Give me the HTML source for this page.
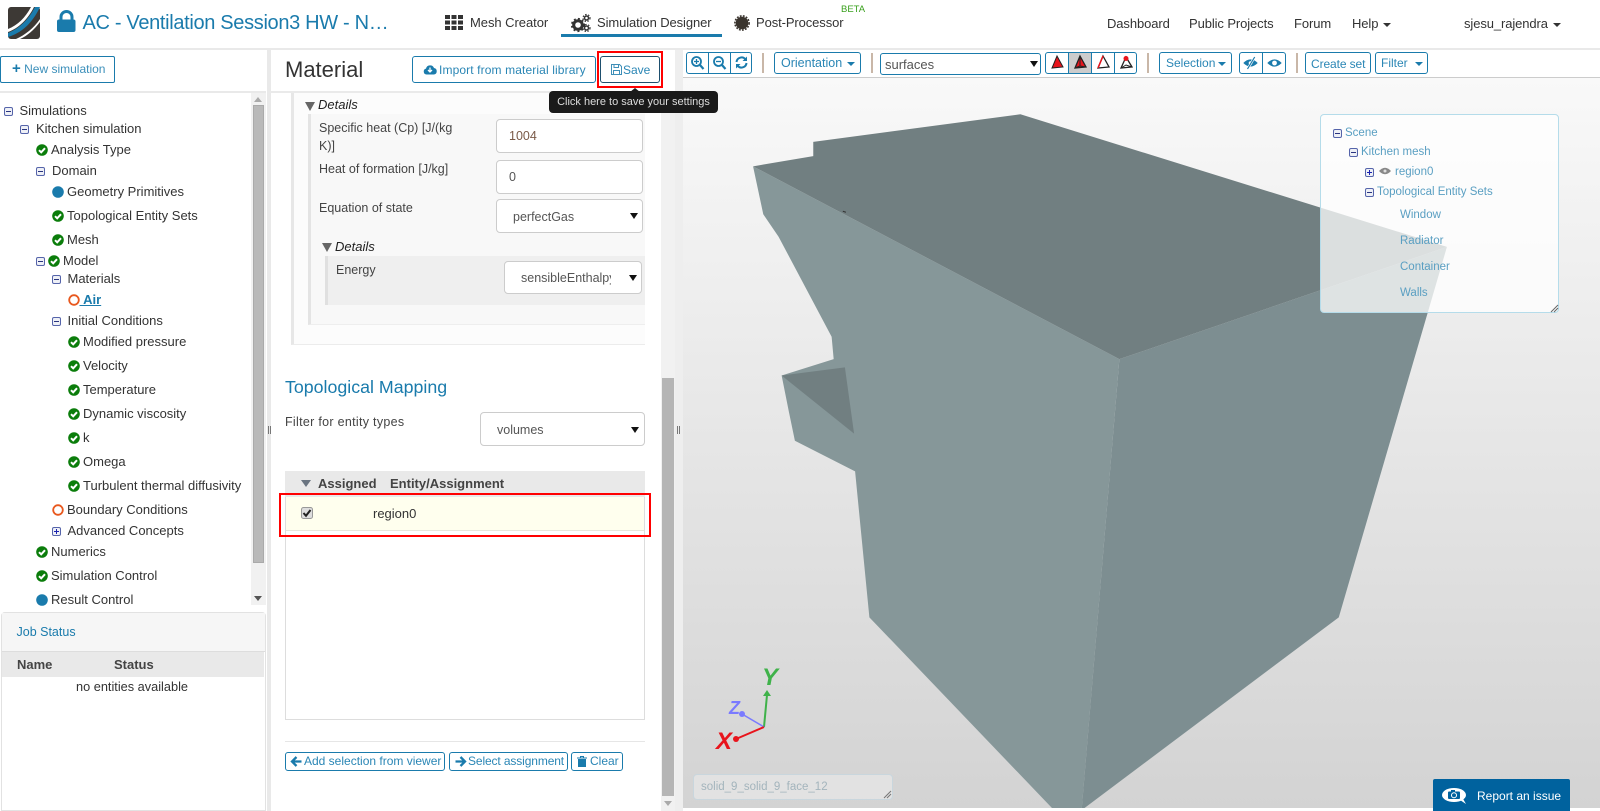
<!DOCTYPE html>
<html><head><meta charset="utf-8"><title>AC - Ventilation Session3 HW</title>
<style>
html,body{margin:0;padding:0;width:1600px;height:811px;overflow:hidden;background:#fff;font-family:"Liberation Sans",sans-serif;color:#333}
.a{position:absolute;white-space:nowrap}
.n{position:absolute;white-space:nowrap;font-size:13px;line-height:20px;color:#333}
.l{position:absolute;white-space:nowrap;font-size:12.5px;line-height:18px;color:#444}
.b{position:absolute;box-sizing:border-box;border:1px solid #1a7bac;border-radius:3px;background:#fff;color:#2a86b5;font-size:12px;text-align:left;white-space:nowrap}
.s{position:absolute;box-sizing:border-box;border:1px solid #ccc;border-radius:4px;background:#fff;font-size:12.5px;color:#555}
.c{position:absolute;width:0;height:0;border-left:4px solid transparent;border-right:4px solid transparent;border-top:4px solid #1a7bac}
.nv{position:absolute;white-space:nowrap;font-size:13px;line-height:20px;color:#333;top:13px}
.sc{position:absolute;white-space:nowrap;font-size:11.5px;line-height:14px;color:#5a9fc2}
.ar{position:absolute;width:0;height:0;border-left:4px solid transparent;border-right:4px solid transparent;border-top:6px solid #111}
svg{display:block;overflow:visible}
.sep{position:absolute;top:53px;width:2px;height:20px;background:#c9b7a8}
</style></head><body>
<svg width="0" height="0" style="position:absolute">
<symbol id="ck" viewBox="0 0 12 12"><circle cx="6" cy="6" r="5.8" fill="#0b7d0b"/><path d="M3 6.2 5.2 8.3 9 4.2" fill="none" stroke="#fff" stroke-width="2"/></symbol>
<symbol id="bl" viewBox="0 0 12 12"><circle cx="6" cy="6" r="5.8" fill="#1a7bac"/></symbol>
<symbol id="or" viewBox="0 0 12 12"><circle cx="6" cy="6" r="4.8" fill="#fff" stroke="#e8581e" stroke-width="1.8"/></symbol>
<symbol id="mi" viewBox="0 0 9 9"><rect x=".5" y=".5" width="8" height="8" rx="1.5" fill="#eef0f6" stroke="#5564aa"/><path d="M2 4.5H7" stroke="#2a3580"/></symbol>
<symbol id="pl" viewBox="0 0 9 9"><rect x=".5" y=".5" width="8" height="8" rx="1.5" fill="#eef0f6" stroke="#5564aa"/><path d="M2 4.5H7M4.5 2V7" stroke="#1a22b0"/></symbol>
</svg>

<!-- header -->
<div class="a" style="left:0;top:0;width:1600px;height:48px;background:#fff;border-bottom:2px solid #e9e9e9;box-sizing:content-box"></div>
<svg class="a" style="left:8px;top:7px" width="32" height="32" viewBox="0 0 32 32"><rect width="32" height="32" rx="3" fill="#3d3935"/><path d="M0 26C10 22 20 14 27 0H32C24 17 13 26 0 30Z" fill="#1a7bac"/><path d="M0 22C10 18 17 11 23 0H26C20 12 11 21 0 25Z" fill="#fff"/><path d="M8 32C17 28 26 21 32 12V15C26 23 19 29 12 32Z" fill="#fff"/></svg>
<svg class="a" style="left:57px;top:10px" width="19" height="22" viewBox="0 0 19 22"><path d="M4 10V7a5.500 5.500 0 0 1 11 0v3" fill="none" stroke="#1a7bac" stroke-width="3"/><rect y="9.500" width="18.500" height="12.500" rx="2" fill="#1a7bac"/></svg>
<div class="a" style="left:82.500px;top:10px;font-size:20px;line-height:26px;letter-spacing:-.33px;color:#1a7bac">AC - Ventilation Session3 HW - N…</div>

<svg class="a" style="left:445px;top:15px" width="18" height="15" viewBox="0 0 18 15" fill="#333"><rect width="5" height="4"/><rect x="6.500" width="5" height="4"/><rect x="13" width="5" height="4"/><rect y="5.500" width="5" height="4"/><rect x="6.500" y="5.500" width="5" height="4"/><rect x="13" y="5.500" width="5" height="4"/><rect y="11" width="5" height="4"/><rect x="6.500" y="11" width="5" height="4"/><rect x="13" y="11" width="5" height="4"/></svg>
<div class="nv" style="left:470px;letter-spacing:-.05px">Mesh Creator</div>
<svg class="a" style="left:571px;top:14px" width="20" height="18" viewBox="0 0 20 18"><circle cx="7" cy="11" r="4.300" fill="none" stroke="#333" stroke-width="3"/><circle cx="7" cy="11" r="6.300" fill="none" stroke="#333" stroke-width="1.600" stroke-dasharray="2 2.200"/><circle cx="15.500" cy="4" r="2" fill="none" stroke="#333" stroke-width="1.500"/><circle cx="15.500" cy="4" r="3.500" fill="none" stroke="#333" stroke-width="1.200" stroke-dasharray="1.500 1.500"/><circle cx="15.500" cy="14" r="2" fill="none" stroke="#333" stroke-width="1.500"/><circle cx="15.500" cy="14" r="3.500" fill="none" stroke="#333" stroke-width="1.200" stroke-dasharray="1.500 1.500"/></svg>
<div class="nv" style="left:597px;letter-spacing:-.1px">Simulation Designer</div>
<div class="a" style="left:561px;top:34px;width:161px;height:3px;background:#1a7bac"></div>
<svg class="a" style="left:734px;top:15px" width="16" height="16" viewBox="0 0 16 16"><circle cx="8" cy="8" r="6.300" fill="#3a342e"/><circle cx="8" cy="8" r="7.100" fill="none" stroke="#3a342e" stroke-width="1.600" stroke-dasharray="1.800 1.300"/></svg>
<div class="nv" style="left:756px;letter-spacing:-.1px">Post-Processor</div>
<div class="a" style="left:841px;top:3px;font-size:9.500px;line-height:14px;color:#3aa01e">BETA</div>
<div class="nv" style="left:1107px;top:14px;letter-spacing:-.1px">Dashboard</div>
<div class="nv" style="left:1189px;top:14px;letter-spacing:-.1px">Public Projects</div>
<div class="nv" style="left:1294px;top:14px;letter-spacing:-.1px">Forum</div>
<div class="nv" style="left:1352px;top:14px;letter-spacing:-.1px">Help</div><div class="c" style="left:1383px;top:23px;border-top-color:#333"></div>
<div class="nv" style="left:1464px;top:14px;letter-spacing:-.1px">sjesu_rajendra</div><div class="c" style="left:1553px;top:23px;border-top-color:#333"></div>

<!-- gutters -->
<div class="a" style="left:267px;top:50px;width:4px;height:761px;background:#e9e9e9"></div>
<div class="a" style="left:267.500px;top:426px;width:3px;height:8px;border-left:1px solid #777;border-right:1px solid #777;box-sizing:border-box"></div>
<div class="a" style="left:675px;top:50px;width:8px;height:761px;background:#eeeeee"></div>
<div class="a" style="left:677px;top:426px;width:3px;height:8px;border-left:1px solid #777;border-right:1px solid #777;box-sizing:border-box"></div>

<!-- left panel -->
<div class="b" style="left:0;top:56px;width:115px;height:27px;line-height:25px;padding-left:11px;border-radius:2px;color:#3b8fba"><span style="font-weight:bold;font-size:15px;color:#1a7bac;line-height:20px">+</span> New simulation</div>
<div class="a" style="left:0;top:91px;width:266px;height:2px;background:#e9e9e9"></div>
<div class="a" style="left:251px;top:93px;width:15px;height:512px;background:#f1f1f1"></div>
<div class="a" style="left:253px;top:105px;width:11px;height:458px;background:#b9b9b9;border:1px solid #aaa;box-sizing:border-box"></div>
<div class="a" style="left:254px;top:97px;width:0;height:0;border-left:4px solid transparent;border-right:4px solid transparent;border-bottom:5px solid #aaa"></div>
<div class="a" style="left:254px;top:596px;width:0;height:0;border-left:4px solid transparent;border-right:4px solid transparent;border-top:5px solid #555"></div>

<svg class="a" style="left:4px;top:107px" width="9" height="9"><use href="#mi"/></svg><div class="n" style="left:19.500px;top:101px">Simulations</div>
<svg class="a" style="left:20px;top:125px" width="9" height="9"><use href="#mi"/></svg><div class="n" style="left:36px;top:119px">Kitchen simulation</div>
<svg class="a" style="left:36px;top:144px" width="12" height="12"><use href="#ck"/></svg><div class="n" style="left:51px;top:140px">Analysis Type</div>
<svg class="a" style="left:36px;top:167px" width="9" height="9"><use href="#mi"/></svg><div class="n" style="left:52px;top:161px">Domain</div>
<svg class="a" style="left:52px;top:186px" width="12" height="12"><use href="#bl"/></svg><div class="n" style="left:67px;top:182px">Geometry Primitives</div>
<svg class="a" style="left:52px;top:210px" width="12" height="12"><use href="#ck"/></svg><div class="n" style="left:67px;top:206px">Topological Entity Sets</div>
<svg class="a" style="left:52px;top:234px" width="12" height="12"><use href="#ck"/></svg><div class="n" style="left:67px;top:230px">Mesh</div>
<svg class="a" style="left:36px;top:257px" width="9" height="9"><use href="#mi"/></svg><svg class="a" style="left:48px;top:255px" width="12" height="12"><use href="#ck"/></svg><div class="n" style="left:63px;top:251px">Model</div>
<svg class="a" style="left:52px;top:275px" width="9" height="9"><use href="#mi"/></svg><div class="n" style="left:67.500px;top:269px">Materials</div>
<svg class="a" style="left:68px;top:294px" width="12" height="12"><use href="#or"/></svg><div class="n" style="left:79.500px;top:290px;font-weight:bold;color:#1a7bac;text-decoration:underline">&nbsp;Air</div>
<svg class="a" style="left:52px;top:317px" width="9" height="9"><use href="#mi"/></svg><div class="n" style="left:67.500px;top:311px">Initial Conditions</div>
<svg class="a" style="left:68px;top:336px" width="12" height="12"><use href="#ck"/></svg><div class="n" style="left:83px;top:332px">Modified pressure</div>
<svg class="a" style="left:68px;top:360px" width="12" height="12"><use href="#ck"/></svg><div class="n" style="left:83px;top:356px">Velocity</div>
<svg class="a" style="left:68px;top:384px" width="12" height="12"><use href="#ck"/></svg><div class="n" style="left:83px;top:380px">Temperature</div>
<svg class="a" style="left:68px;top:408px" width="12" height="12"><use href="#ck"/></svg><div class="n" style="left:83px;top:404px">Dynamic viscosity</div>
<svg class="a" style="left:68px;top:432px" width="12" height="12"><use href="#ck"/></svg><div class="n" style="left:83px;top:428px">k</div>
<svg class="a" style="left:68px;top:456px" width="12" height="12"><use href="#ck"/></svg><div class="n" style="left:83px;top:452px">Omega</div>
<svg class="a" style="left:68px;top:480px" width="12" height="12"><use href="#ck"/></svg><div class="n" style="left:83px;top:476px">Turbulent thermal diffusivity</div>
<svg class="a" style="left:52px;top:504px" width="12" height="12"><use href="#or"/></svg><div class="n" style="left:67px;top:500px">Boundary Conditions</div>
<svg class="a" style="left:52px;top:527px" width="9" height="9"><use href="#pl"/></svg><div class="n" style="left:67.500px;top:521px">Advanced Concepts</div>
<svg class="a" style="left:36px;top:546px" width="12" height="12"><use href="#ck"/></svg><div class="n" style="left:51px;top:542px">Numerics</div>
<svg class="a" style="left:36px;top:570px" width="12" height="12"><use href="#ck"/></svg><div class="n" style="left:51px;top:566px">Simulation Control</div>
<svg class="a" style="left:36px;top:594px" width="12" height="12"><use href="#bl"/></svg><div class="n" style="left:51px;top:590px">Result Control</div>

<!-- job status -->
<div class="a" style="left:1px;top:612px;width:265px;height:199px;border:1px solid #e2e2e2;border-radius:4px 4px 0 0;box-sizing:border-box;background:#fff"></div>
<div class="a" style="left:2px;top:613px;width:263px;height:38px;background:#f6f6f6;border-bottom:1px solid #ddd"></div>
<div class="a" style="left:16.500px;top:623px;font-size:12.500px;line-height:18px;color:#1a7bac">Job Status</div>
<div class="a" style="left:2px;top:652px;width:262px;height:25px;background:#e9e9e9"></div>
<div class="a" style="left:17px;top:656px;font-size:13px;font-weight:bold;line-height:18px;color:#444">Name</div>
<div class="a" style="left:114px;top:656px;font-size:13px;font-weight:bold;line-height:18px;color:#444">Status</div>
<div class="a" style="left:76px;top:678px;font-size:12.750px;line-height:18px;color:#333">no entities available</div>

<!-- material panel -->
<div class="a" style="left:285px;top:56px;font-size:22px;line-height:28px;color:#333">Material</div>
<div class="b" style="left:412px;top:56px;width:184px;height:27px;line-height:26px;padding-left:26px;letter-spacing:.12px">Import from material library</div>
<svg class="a" style="left:423px;top:64px" width="14" height="11" viewBox="0 0 14 11"><path d="M3.500 10.500A3 3 0 0 1 3 4.600 4.200 4.200 0 0 1 11 4a3.300 3.300 0 0 1 0 6.500Z" fill="#1a7bac"/><path d="M7 3.500v4M5 6l2 2 2-2" fill="none" stroke="#fff" stroke-width="1.300"/></svg>
<div class="b" style="left:600px;top:56px;width:60px;height:27px;line-height:26px;padding-left:22px;border-color:#1e4f6e">Save</div>
<svg class="a" style="left:611px;top:64px" width="11" height="11" viewBox="0 0 11 11"><path d="M.5.500H8.500L10.500 2.500V10.500H.5ZM3 .5V3.500H7.500V.5M2.500 10.500V6.500H8.500V10.500" fill="none" stroke="#3f8fb8" stroke-width="1"/></svg>
<div class="a" style="left:597px;top:51px;width:66px;height:37px;border:2px solid #f00;box-sizing:border-box"></div>
<div class="a" style="left:270px;top:91px;width:391px;height:2px;background:#eaeaea"></div>
<div class="a" style="left:661px;top:93px;width:14px;height:718px;background:#f1f1f1"></div>
<div class="a" style="left:662px;top:378px;width:12px;height:418px;background:#b5b5b5"></div>
<div class="a" style="left:664px;top:801px;width:0;height:0;border-left:4px solid transparent;border-right:4px solid transparent;border-top:5px solid #aaa"></div>

<div class="a" style="left:291px;top:93px;width:354px;height:252px;background:#fcfcfc;border-left:3px solid #e7e7e7;border-bottom:1px solid #ececec;box-sizing:border-box"></div>
<div class="a" style="left:305px;top:102px;width:0;height:0;border-left:5.500px solid transparent;border-right:5.500px solid transparent;border-top:9px solid #666"></div>
<div class="a" style="left:318px;top:97px;font-size:13px;font-style:italic;line-height:16px;color:#222">Details</div>
<div class="a" style="left:308px;top:114px;width:337px;height:211px;background:#f8f8f8;border-left:3px solid #e4e4e4;border-bottom:1px solid #eee;box-sizing:border-box"></div>
<div class="l" style="left:319px;top:119px">Specific heat (Cp) [J/(kg</div>
<div class="l" style="left:319px;top:137px">K)]</div>
<div class="l" style="left:319px;top:160px">Heat of formation [J/kg]</div>
<div class="l" style="left:319px;top:199px">Equation of state</div>
<div class="s" style="left:496px;top:119px;width:147px;height:34px;line-height:32px;padding-left:12px;color:#7a5a48">1004</div>
<div class="s" style="left:496px;top:160px;width:147px;height:34px;line-height:32px;padding-left:12px">0</div>
<div class="s" style="left:496px;top:199px;width:147px;height:34px;line-height:34px;padding-left:16px">perfectGas</div><div class="ar" style="left:630px;top:213px"></div>
<div class="a" style="left:322px;top:243px;width:0;height:0;border-left:5.500px solid transparent;border-right:5.500px solid transparent;border-top:9px solid #666"></div>
<div class="a" style="left:335px;top:239px;font-size:13px;font-style:italic;line-height:16px;color:#222">Details</div>
<div class="a" style="left:325px;top:256px;width:320px;height:49px;background:#efefef;border-left:3px solid #e0e0e0;box-sizing:border-box"></div>
<div class="l" style="left:336px;top:261px">Energy</div>
<div class="s" style="left:504px;top:261px;width:138px;height:33px;line-height:33px;padding-left:16px;overflow:hidden"><span style="display:block;width:90px;overflow:hidden">sensibleEnthalpy</span></div><div class="ar" style="left:629px;top:275px"></div>

<div class="a" style="left:285px;top:376px;font-size:17.800px;line-height:22px;color:#1a7bac">Topological Mapping</div>
<div class="l" style="left:285px;top:413px;letter-spacing:.3px">Filter for entity types</div>
<div class="s" style="left:480px;top:412px;width:165px;height:34px;line-height:34px;padding-left:16px">volumes</div><div class="ar" style="left:631px;top:427px"></div>

<div class="a" style="left:285px;top:471px;width:360px;height:249px;border:1px solid #ddd;box-sizing:border-box;background:#fff"></div>
<div class="a" style="left:285px;top:471px;width:360px;height:26px;background:#e9e9e9"></div>
<div class="a" style="left:301px;top:480px;width:0;height:0;border-left:5px solid transparent;border-right:5px solid transparent;border-top:7px solid #6a7480"></div>
<div class="a" style="left:318px;top:475px;font-size:13px;font-weight:bold;line-height:18px;color:#444">Assigned</div>
<div class="a" style="left:390px;top:475px;font-size:13px;font-weight:bold;line-height:18px;color:#444">Entity/Assignment</div>
<div class="a" style="left:286px;top:497px;width:358px;height:34px;background:#ffffee;border-bottom:1px solid #e6e6dc;box-sizing:border-box"></div>
<svg class="a" style="left:301px;top:507px" width="12" height="12" viewBox="0 0 12 12"><rect x=".5" y=".5" width="11" height="11" rx="2" fill="#ddd" stroke="#999"/><path d="M2.500 6 5 8.800 9.500 3" fill="none" stroke="#222" stroke-width="2"/></svg>
<div class="a" style="left:373px;top:505px;font-size:13px;line-height:18px;color:#333">region0</div>
<div class="a" style="left:279px;top:493px;width:372px;height:44px;border:2px solid #f00;box-sizing:border-box"></div>
<div class="a" style="left:285px;top:741px;width:360px;height:1px;background:#e6e6e6"></div>
<div class="b" style="left:285px;top:752px;width:160px;height:19px;line-height:17px;padding-left:18px">Add selection from viewer</div>
<svg class="a" style="left:291px;top:756px" width="11" height="11" viewBox="0 0 11 11"><path d="M5.500 1 1 5.500 5.500 10M1.500 5.500H10.500" fill="none" stroke="#1a7bac" stroke-width="2.300"/></svg>
<div class="b" style="left:449px;top:752px;width:119px;height:19px;line-height:17px;padding-left:18px;letter-spacing:-.12px">Select assignment</div>
<svg class="a" style="left:455px;top:756px" width="11" height="11" viewBox="0 0 11 11"><path d="M5.500 1 10 5.500 5.500 10M9.500 5.500H.5" fill="none" stroke="#1a7bac" stroke-width="2.300"/></svg>
<div class="b" style="left:571px;top:752px;width:52px;height:19px;line-height:17px;padding-left:18px">Clear</div>
<svg class="a" style="left:577px;top:756px" width="10" height="11" viewBox="0 0 10 11"><path d="M0 2H10M3.500 2V.5H6.500V2" fill="none" stroke="#1a7bac"/><path d="M1 3H9V11H1Z" fill="#1a7bac"/></svg>

<!-- viewer -->
<div class="a" style="left:683px;top:77px;width:917px;height:731px;background:linear-gradient(#f9f9f9,#d3d3d3);border-top:1px solid #ccc;box-sizing:border-box;overflow:hidden"></div>
<svg class="a" style="left:0;top:0;clip-path:inset(78px 0 3px 683px)" width="1600" height="811" viewBox="0 0 1568 794.800">
<polygon fill="#869799" points="738,163 748,210 763,232 815,330 817,352 766,368 773,403 779,432 838,462 852,605 1033,794 1060,794 1097,352"/>
<polygon fill="#7d8e91" points="1097,352 1418,242 1312,605 1060,794"/>
<polygon fill="#717f81" points="738,163 797,153 797,139 1000,112 1418,242 1097,352"/>
<polygon fill="#717f81" points="766,368 828,360 837,425"/>
<path d="M826 207l3 1" stroke="#333" stroke-width="1"/>
</svg>

<!-- tooltip -->
<div class="a" style="left:630px;top:88px;width:0;height:0;border-left:5px solid transparent;border-right:5px solid transparent;border-bottom:4px solid #1a1a1a"></div>
<div class="a" style="left:549px;top:91px;width:169px;height:22px;background:#1a1a1a;border-radius:4px;color:#ddd;font-size:11px;line-height:22px;text-align:center">Click here to save your settings</div>

<!-- scene panel -->
<div class="a" style="left:1320px;top:114px;width:239px;height:199px;background:rgba(255,255,255,.75);border:1px solid #b5dcea;border-radius:4px;box-sizing:border-box"></div>
<svg class="a" style="left:1333px;top:129px" width="9" height="9"><use href="#mi"/></svg><div class="sc" style="left:1345px;top:126px">Scene</div>
<svg class="a" style="left:1349px;top:148px" width="9" height="9"><use href="#mi"/></svg><div class="sc" style="left:1361px;top:145px">Kitchen mesh</div>
<svg class="a" style="left:1365px;top:168px" width="9" height="9"><use href="#pl"/></svg>
<svg class="a" style="left:1379px;top:167px" width="12" height="8" viewBox="0 0 12 8"><path d="M0 4Q6-2.500 12 4 6 10.500 0 4Z" fill="#888"/><circle cx="6" cy="4" r="1.500" fill="#ddd"/></svg>
<div class="sc" style="left:1395px;top:165px">region0</div>
<svg class="a" style="left:1365px;top:188px" width="9" height="9"><use href="#mi"/></svg><div class="sc" style="left:1377px;top:185px">Topological Entity Sets</div>
<div class="sc" style="left:1400px;top:208px">Window</div>
<div class="sc" style="left:1400px;top:234px">Radiator</div>
<div class="sc" style="left:1400px;top:260px">Container</div>
<div class="sc" style="left:1400px;top:286px">Walls</div>
<svg class="a" style="left:1551px;top:305px" width="7" height="7"><path d="M0 7 7 0M3 7 7 3" stroke="#666" stroke-width="1"/></svg>

<!-- axes -->
<svg class="a" style="left:710px;top:660px" width="80" height="100" viewBox="710 660 80 100">
<path d="M764 727 767 695" stroke="#3fb24a" stroke-width="2"/><path d="M767 690 763 696H771Z" fill="#3fb24a"/>
<path d="M764 727 742 714" stroke="#7a7aff" stroke-width="1.500"/><circle cx="742" cy="714" r="3" fill="#7a7aff"/>
<path d="M764 727 736 739" stroke="#e8141c" stroke-width="2"/><circle cx="736" cy="739" r="3" fill="#e8141c"/>
<text x="762" y="685" font-family="Liberation Sans" font-size="24" font-weight="bold" font-style="italic" fill="#3fb24a">Y</text>
<text x="729" y="714" font-family="Liberation Sans" font-size="18" font-weight="bold" font-style="italic" fill="#7a7aff">Z</text>
<text x="716" y="749" font-family="Liberation Sans" font-size="24" font-weight="bold" font-style="italic" fill="#e8141c">X</text>
</svg>
<div class="a" style="left:693px;top:774px;width:200px;height:26px;background:rgba(235,235,235,.6);border:1px solid #c9d6dd;border-radius:4px;box-sizing:border-box;font-size:11.500px;line-height:25px;padding-left:7px;color:#a3b4bc">solid_9_solid_9_face_12</div>
<svg class="a" style="left:884px;top:791px" width="7" height="7"><path d="M0 7 7 0M3 7 7 3" stroke="#777" stroke-width="1"/></svg>

<div class="a" style="left:1433px;top:779px;width:137px;height:32px;background:#00629e;border-radius:2px 2px 0 0"></div>
<svg class="a" style="left:1442px;top:788px" width="26" height="16" viewBox="0 0 26 16"><ellipse cx="12" cy="7" rx="12" ry="7" fill="#fff"/><path d="M18 12 24 16 20 9Z" fill="#fff"/><rect x="6" y="3.500" width="12" height="7.500" rx="1" fill="#00629e"/><rect x="9" y="2" width="4" height="2" fill="#00629e"/><circle cx="12" cy="7.200" r="2.500" fill="#00629e" stroke="#fff"/></svg>
<div class="a" style="left:1477px;top:787px;font-size:12px;line-height:18px;color:#fff">Report an issue</div>

<!-- toolbar -->
<div class="b" style="left:686px;top:52px;width:66px;height:22px"></div>
<div class="a" style="left:708px;top:52px;width:1px;height:22px;background:#1a7bac"></div><div class="a" style="left:730px;top:52px;width:1px;height:22px;background:#1a7bac"></div>
<svg class="a" style="left:691px;top:56px" width="13" height="14" viewBox="0 0 13 14"><circle cx="5.500" cy="5.500" r="4.500" fill="none" stroke="#1a7bac" stroke-width="1.800"/><path d="M9 9 12.500 13" stroke="#1a7bac" stroke-width="2.200"/><path d="M3 5.500H8M5.500 3V8" stroke="#1a7bac" stroke-width="1.300"/></svg>
<svg class="a" style="left:713px;top:56px" width="13" height="14" viewBox="0 0 13 14"><circle cx="5.500" cy="5.500" r="4.500" fill="none" stroke="#1a7bac" stroke-width="1.800"/><path d="M9 9 12.500 13" stroke="#1a7bac" stroke-width="2.200"/><path d="M3 5.500H8" stroke="#1a7bac" stroke-width="1.300"/></svg>
<svg class="a" style="left:735px;top:56px" width="13" height="13" viewBox="0 0 13 13"><path d="M1.500 6A5 5 0 0 1 10.500 3.500M11.500 7A5 5 0 0 1 2.500 9.500" fill="none" stroke="#1a7bac" stroke-width="2"/><path d="M12 .5V5H7.500ZM1 12.500V8H5.500Z" fill="#1a7bac"/></svg>
<div class="sep" style="left:762px"></div>
<div class="b" style="left:774px;top:52px;width:87px;height:22px;line-height:20px;padding-left:6px;font-size:12.500px">Orientation</div><div class="c" style="left:847px;top:62px"></div>
<div class="sep" style="left:871px"></div>
<div class="b" style="left:880px;top:53px;width:161px;height:22px;line-height:21px;padding-left:4px;font-size:13px;color:#555">surfaces</div><div class="ar" style="left:1030px;top:61px"></div>

<div class="b" style="left:1045px;top:52px;width:92px;height:22px"></div>
<div class="a" style="left:1069px;top:53px;width:22px;height:20px;background:#ccc"></div>
<div class="a" style="left:1068px;top:52px;width:1px;height:22px;background:#1a7bac"></div><div class="a" style="left:1091px;top:52px;width:1px;height:22px;background:#1a7bac"></div><div class="a" style="left:1114px;top:52px;width:1px;height:22px;background:#1a7bac"></div>
<svg class="a" style="left:1051px;top:55px" width="12" height="15" viewBox="0 0 12 15"><path d="M6 1 12 12 1 13Z" fill="#e8141c" stroke="#222" stroke-width="1"/></svg>
<svg class="a" style="left:1074px;top:55px" width="12" height="15" viewBox="0 0 12 15"><path d="M6 1 12 12 1 13Z" fill="#e8141c" stroke="#222" stroke-width="1.300"/><path d="M6 1V11M1 13 6 11 12 12" fill="none" stroke="#222"/></svg>
<svg class="a" style="left:1097px;top:55px" width="12" height="15" viewBox="0 0 12 15"><path d="M6 1 12 12 1 13Z" fill="#fff" stroke="#222" stroke-width="1.300"/><path d="M6 1 1 13" stroke="#e8141c" stroke-width="1.500"/></svg>
<svg class="a" style="left:1120px;top:55px" width="12" height="15" viewBox="0 0 12 15"><path d="M6 2 12 12 1 13Z" fill="#fff" stroke="#222" stroke-width="1.300"/><path d="M1 13 6 10 12 12" fill="none" stroke="#222"/><circle cx="6" cy="3.500" r="2.500" fill="#e8141c"/></svg>
<div class="sep" style="left:1147px"></div>
<div class="b" style="left:1159px;top:52px;width:73px;height:22px;line-height:20px;padding-left:6px">Selection</div><div class="c" style="left:1218px;top:62px"></div>
<div class="b" style="left:1239px;top:52px;width:47px;height:22px"></div>
<div class="a" style="left:1262px;top:52px;width:1px;height:22px;background:#1a7bac"></div>
<svg class="a" style="left:1243px;top:57px" width="15" height="12" viewBox="0 0 12 10"><path d="M0 5Q6-1 12 5 6 11 0 5Z" fill="#1a7bac"/><circle cx="6" cy="5" r="1.500" fill="#fff"/><path d="M9.500 0 3.500 10" stroke="#fff" stroke-width="2"/><path d="M9.500 0 3.500 10" stroke="#1a7bac" stroke-width="1"/></svg>
<svg class="a" style="left:1267px;top:57px" width="15" height="12" viewBox="0 0 12 10"><path d="M0 5Q6-1 12 5 6 11 0 5Z" fill="#1a7bac"/><circle cx="6" cy="5" r="2" fill="#fff"/></svg>
<div class="sep" style="left:1296px"></div>
<div class="b" style="left:1305px;top:52px;width:66px;height:22px;line-height:22px;padding-left:5px;letter-spacing:-.1px">Create set</div>
<div class="b" style="left:1375px;top:52px;width:53px;height:22px;line-height:20px;padding-left:5px">Filter</div><div class="c" style="left:1415px;top:62px"></div>
</body></html>
